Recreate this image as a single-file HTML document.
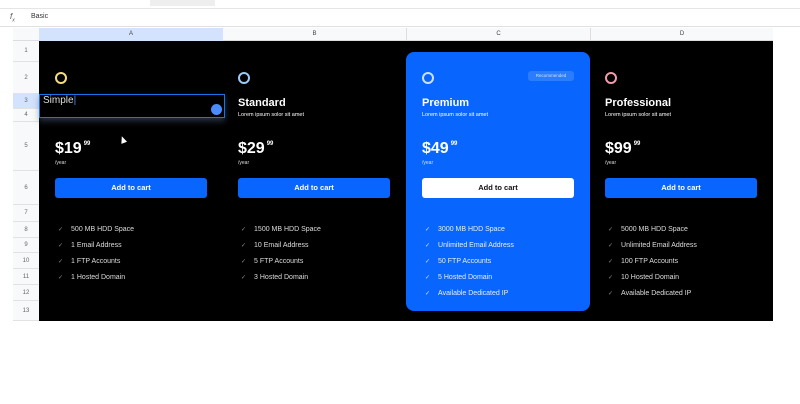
<!DOCTYPE html><html><head><style>
*{margin:0;padding:0;box-sizing:border-box}
body{width:800px;height:404px;background:#fff;font-family:"Liberation Sans",sans-serif;position:relative;overflow:hidden}
.a{position:absolute}
.rh{position:absolute;left:13px;width:26px;font-size:6px;color:#666;text-align:center;border-bottom:1px solid #e2e2e2;background:#f8f9fa}
.ring{position:absolute;width:12px;height:12px;border-radius:50%;border:2.5px solid}
.t{position:absolute;color:#fff;font-weight:bold;font-size:11px}
.s{position:absolute;color:#fff;font-size:5.5px}
.p{position:absolute;color:#fff;font-weight:bold;font-size:16px}
.p sup{font-size:6px;vertical-align:8px;margin-left:2px}
.y{position:absolute;color:#ddd;font-size:5px}
.b{position:absolute;width:152px;height:20px;border-radius:3px;background:#0866ff;color:#fff;font-weight:bold;font-size:7.5px;text-align:center;line-height:20px}
.f{position:absolute;color:#ddd;font-size:7px;line-height:16px}
.f span{color:#888;margin-right:8px;font-size:6px}
</style></head><body>
<div class="a" style="left:0;top:0;width:800px;height:9px;background:#fff;border-bottom:1px solid #e5e5e5"></div>
<div class="a" style="left:150px;top:0;width:65px;height:6px;background:#eee"></div>
<div class="a" style="left:10px;top:12px;font-size:8px;color:#555;font-style:italic">f<sub style="font-size:5px">x</sub></div>
<div class="a" style="left:31px;top:13px;font-size:7px;color:#333">Basic</div>
<div class="a" style="left:0;top:26px;width:800px;height:1px;background:#e0e0e0"></div>
<div class="a" style="left:13px;top:28px;width:760px;height:13px;background:#f8f9fa;border-bottom:1px solid #ddd"></div>
<div class="a" style="left:39px;top:28px;width:184px;height:13px;background:#d3e3fd;font-size:6px;color:#444;text-align:center;line-height:13px">A</div>
<div class="a" style="left:223px;top:28px;width:183px;height:13px;font-size:6px;color:#444;text-align:center;line-height:13px">B</div>
<div class="a" style="left:406px;top:28px;width:184px;height:13px;font-size:6px;color:#444;text-align:center;line-height:13px;border-left:1px solid #ddd">C</div>
<div class="a" style="left:590px;top:28px;width:183px;height:13px;font-size:6px;color:#444;text-align:center;line-height:13px;border-left:1px solid #ddd">D</div>
<div class="rh" style="top:41px;height:21px;line-height:21px">1</div>
<div class="rh" style="top:62px;height:32px;line-height:32px">2</div>
<div class="rh" style="top:94px;height:15px;line-height:15px;background:#d3e3fd">3</div>
<div class="rh" style="top:109px;height:13px;line-height:13px">4</div>
<div class="rh" style="top:122px;height:49px;line-height:49px">5</div>
<div class="rh" style="top:171px;height:34px;line-height:34px">6</div>
<div class="rh" style="top:205px;height:17px;line-height:17px">7</div>
<div class="rh" style="top:222px;height:16px;line-height:16px">8</div>
<div class="rh" style="top:238px;height:15px;line-height:15px">9</div>
<div class="rh" style="top:253px;height:16px;line-height:16px">10</div>
<div class="rh" style="top:269px;height:16px;line-height:16px">11</div>
<div class="rh" style="top:285px;height:16px;line-height:16px">12</div>
<div class="rh" style="top:301px;height:20px;line-height:20px">13</div>
<div class="a" style="left:39px;top:41px;width:734px;height:280px;background:#000"></div>
<div class="a" style="left:406px;top:52px;width:184px;height:259px;background:#0866ff;border-radius:8px"></div>
<div class="a" style="left:528px;top:71px;width:46px;height:10px;background:#2b7cff;border-radius:3px;color:#cfe0ff;font-size:4.5px;text-align:center;line-height:10px">Recommended</div>

<div class="ring" style="left:55px;top:72px;border-color:#f4dd7a"></div>
<div class="ring" style="left:238px;top:72px;border-color:#9cc9f5"></div>
<div class="ring" style="left:422px;top:72px;border-color:#cfe0ff"></div>
<div class="ring" style="left:605px;top:72px;border-color:#f49aa8"></div>

<div class="a" style="left:39px;top:94px;width:186px;height:24px;border:1px solid #1a73e8;background:#000;box-shadow:0 3px 6px rgba(80,100,140,.5)"></div>
<div class="a" style="left:43px;top:95px;color:#ddd;font-size:10px">Simple<span style="color:#4a90ff">|</span></div>
<div class="a" style="left:211px;top:104px;width:11px;height:11px;border-radius:50%;background:#4a8cff"></div>
<div class="t" style="left:238px;top:97px">Standard</div>
<div class="t" style="left:422px;top:97px">Premium</div>
<div class="t" style="left:605px;top:97px">Professional</div>
<div class="s" style="left:238px;top:112px">Lorem ipsum solor sit amet</div>
<div class="s" style="left:422px;top:112px">Lorem ipsum solor sit amet</div>
<div class="s" style="left:605px;top:112px">Lorem ipsum solor sit amet</div>

<div class="p" style="left:55px;top:140px">$19<sup>99</sup></div>
<div class="p" style="left:238px;top:140px">$29<sup>99</sup></div>
<div class="p" style="left:422px;top:140px">$49<sup>99</sup></div>
<div class="p" style="left:605px;top:140px">$99<sup>99</sup></div>
<div class="y" style="left:55px;top:160px">/year</div>
<div class="y" style="left:238px;top:160px">/year</div>
<div class="y" style="left:422px;top:160px">/year</div>
<div class="y" style="left:605px;top:160px">/year</div>

<div class="b" style="left:55px;top:178px">Add to cart</div>
<div class="b" style="left:238px;top:178px">Add to cart</div>
<div class="b" style="left:422px;top:178px;background:#fff;color:#111">Add to cart</div>
<div class="b" style="left:605px;top:178px">Add to cart</div>

<div class="f" style="left:58px;top:222px"><span>✓</span>500 MB HDD Space<br><span>✓</span>1 Email Address<br><span>✓</span>1 FTP Accounts<br><span>✓</span>1 Hosted Domain</div>
<div class="f" style="left:241px;top:222px"><span>✓</span>1500 MB HDD Space<br><span>✓</span>10 Email Address<br><span>✓</span>5 FTP Accounts<br><span>✓</span>3 Hosted Domain</div>
<div class="f" style="left:425px;top:222px;color:#e6eeff"><span style="color:#cfe0ff">✓</span>3000 MB HDD Space<br><span style="color:#cfe0ff">✓</span>Unlimited Email Address<br><span style="color:#cfe0ff">✓</span>50 FTP Accounts<br><span style="color:#cfe0ff">✓</span>5 Hosted Domain<br><span style="color:#cfe0ff">✓</span>Available Dedicated IP</div>
<div class="f" style="left:608px;top:222px"><span>✓</span>5000 MB HDD Space<br><span>✓</span>Unlimited Email Address<br><span>✓</span>100 FTP Accounts<br><span>✓</span>10 Hosted Domain<br><span>✓</span>Available Dedicated IP</div>
<div class="a" style="left:120px;top:136px;width:0;height:0;border-left:3px solid transparent;border-right:3px solid transparent;border-bottom:7px solid #fff;transform:rotate(-20deg)"></div>
</body></html>
